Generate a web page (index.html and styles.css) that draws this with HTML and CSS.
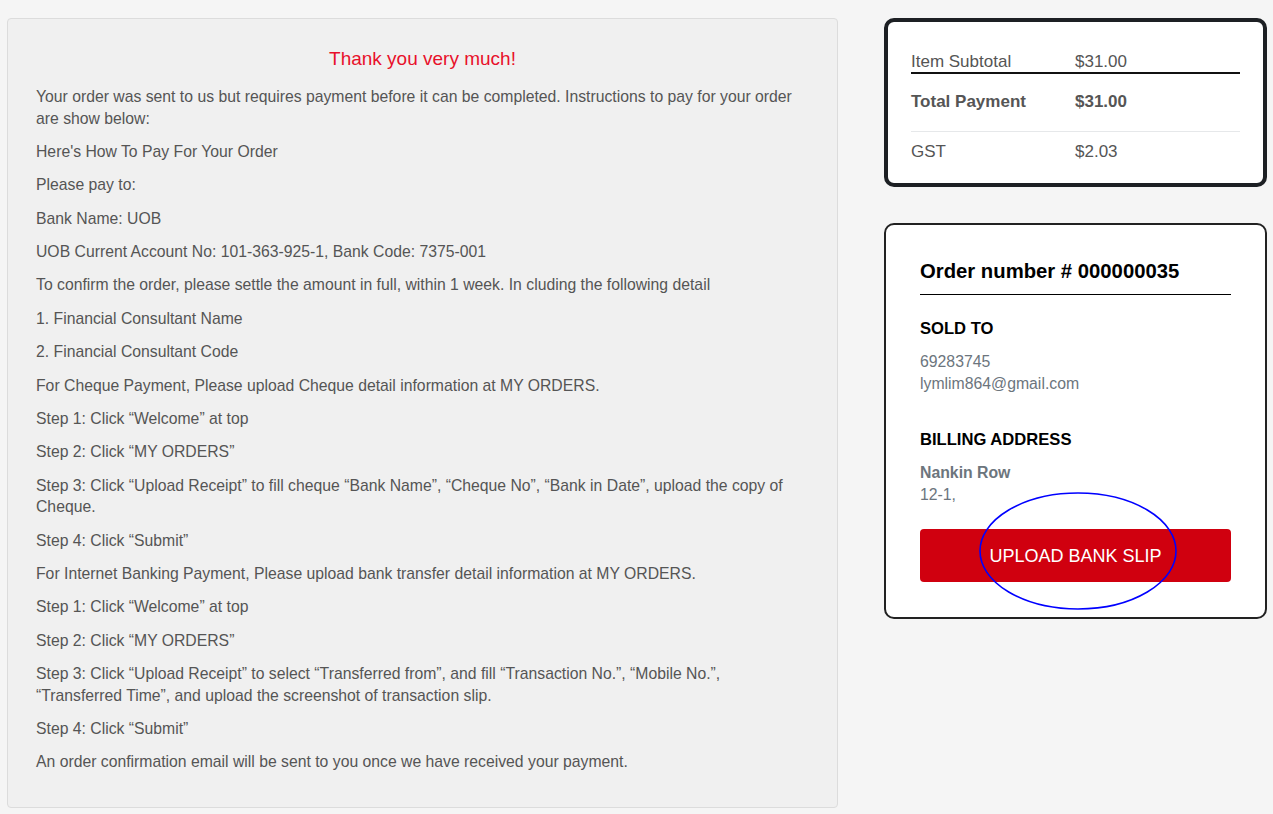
FILE: index.html
```html
<!DOCTYPE html>
<html lang="en">
<head>
<meta charset="utf-8">
<title>Order confirmation</title>
<link rel="stylesheet" href="styles.css">
</head>
<body>
<div class="page">
  <main class="panel">
    <h1 class="thanks">Thank you very much!</h1>
    <p>Your order was sent to us but requires payment before it can be completed. Instructions to pay for your order are show below:</p>
    <p>Here's How To Pay For Your Order</p>
    <p>Please pay to:</p>
    <p>Bank Name: UOB</p>
    <p>UOB Current Account No: 101-363-925-1, Bank Code: 7375-001</p>
    <p>To confirm the order, please settle the amount in full, within 1 week. In cluding the following detail</p>
    <p>1. Financial Consultant Name</p>
    <p>2. Financial Consultant Code</p>
    <p>For Cheque Payment, Please upload Cheque detail information at MY ORDERS.</p>
    <p>Step 1: Click “Welcome” at top</p>
    <p>Step 2: Click “MY ORDERS”</p>
    <p>Step 3: Click “Upload Receipt” to fill cheque “Bank Name”, “Cheque No”, “Bank in Date”, upload the copy of Cheque.</p>
    <p>Step 4: Click “Submit”</p>
    <p>For Internet Banking Payment, Please upload bank transfer detail information at MY ORDERS.</p>
    <p>Step 1: Click “Welcome” at top</p>
    <p>Step 2: Click “MY ORDERS”</p>
    <p>Step 3: Click “Upload Receipt” to select “Transferred from”, and fill “Transaction No.”, “Mobile No.”, “Transferred Time”, and upload the screenshot of transaction slip.</p>
    <p>Step 4: Click “Submit”</p>
    <p>An order confirmation email will be sent to you once we have received your payment.</p>
  </main>
  <aside class="side">
    <section class="summary">
      <div class="row row-sub"><span>Item Subtotal</span><span>$31.00</span></div>
      <div class="row row-total"><span>Total Payment</span><span>$31.00</span></div>
      <div class="row row-gst"><span>GST</span><span>$2.03</span></div>
    </section>
    <section class="order">
      <h2 class="order-no">Order number # 000000035</h2>
      <h3 class="label label-sold">SOLD TO</h3>
      <div class="info">69283745<br>lymlim864@gmail.com</div>
      <h3 class="label label-bill">BILLING ADDRESS</h3>
      <div class="info"><strong>Nankin Row</strong><br>12-1,</div>
      <button class="upload" type="button">UPLOAD BANK SLIP</button>
      <svg class="mark" width="200" height="120" viewBox="0 0 200 120" aria-hidden="true">
        <ellipse cx="100" cy="60" rx="98" ry="58" fill="none" stroke="#0000ff" stroke-width="1.6"/>
      </svg>
    </section>
  </aside>
</div>
</body>
</html>
```

FILE: styles.css
```css
html, body {
  margin: 0;
  padding: 0;
  background: #f5f5f5;
  font-family: "Liberation Sans", Arial, sans-serif;
}

.page {
  display: flex;
  align-items: flex-start;
  gap: 46px;
  padding: 18px 6px 6px 7px;
}

.panel {
  width: 831px;
  box-sizing: border-box;
  background: #f0f0f0;
  border: 1px solid #dcdcdc;
  border-radius: 4px;
  padding: 29px 28px 22px 28px;
  color: #555;
  font-size: 15.75px;
}

.thanks {
  margin: 0 0 16px 0;
  text-align: center;
  color: #e8102b;
  font-size: 19px;
  font-weight: normal;
  line-height: 22px;
}

.panel p {
  margin: 0 0 11.6px 0;
  line-height: 21.75px;
}

.side {
  width: 383px;
  display: flex;
  flex-direction: column;
  gap: 36px;
}

.summary {
  background: #fff;
  border: 4px solid #1d2024;
  border-radius: 10px;
  padding: 29px 23px 20px 23px;
  color: #555;
  font-size: 17px;
}

.row {
  display: grid;
  grid-template-columns: 164px 1fr;
  line-height: 22px;
}

.row-sub {
  line-height: 21px;
  border-bottom: 2px solid #111;
}

.row-total {
  font-weight: bold;
  padding: 17px 0 18px 0;
  border-bottom: 1px solid #e6e8ea;
}

.row-gst {
  padding-top: 9px;
}

.order {
  position: relative;
  background: #fff;
  border: 2px solid #222;
  border-radius: 10px;
  padding: 35px 34px 35px 34px;
}

.order-no {
  margin: 0;
  font-size: 20.3px;
  line-height: 22px;
  font-weight: bold;
  color: #000;
  padding-bottom: 12px;
  border-bottom: 1px solid #000;
}

.label {
  margin: 0;
  font-size: 16.6px;
  line-height: 20px;
  font-weight: bold;
  color: #000;
}

.label-sold {
  margin-top: 24px;
  margin-bottom: 12px;
}

.label-bill {
  margin-top: 35px;
  margin-bottom: 12px;
}

.info {
  color: #6c757d;
  font-size: 15.8px;
  line-height: 22px;
}

.info strong {
  font-weight: bold;
}

.upload {
  display: block;
  width: 100%;
  height: 53px;
  margin-top: 23px;
  padding-top: 3px;
  border: none;
  border-radius: 4px;
  background: #d0000f;
  color: #fff;
  font-family: "Liberation Sans", Arial, sans-serif;
  font-size: 18px;
  cursor: pointer;
}

.mark {
  position: absolute;
  left: 92px;
  top: 266px;
}
```
